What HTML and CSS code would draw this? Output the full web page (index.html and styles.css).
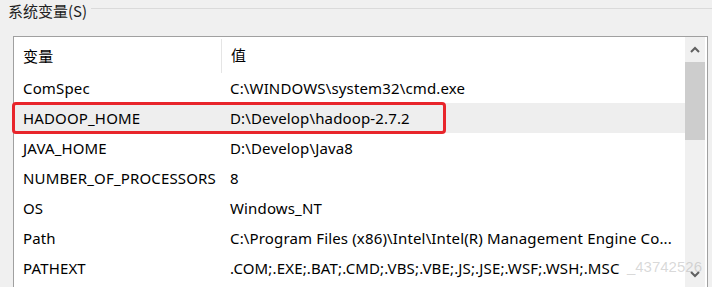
FILE: index.html
```html
<!DOCTYPE html>
<html lang="zh-CN">
<head>
  <meta charset="UTF-8">
  <title>系统变量</title>
  <link rel="stylesheet" href="styles.css">
</head>
<body>
  <div class="group">
    <div class="legend">
      <span class="legend-text">系统变量(S)</span>
      <span class="legend-line"></span>
    </div>
    <div class="list">
      <div class="table">
        <div class="row head">
          <div class="cell name">变量</div>
          <div class="cell value">值</div>
        </div>
        <div class="row">
          <div class="cell name">ComSpec</div>
          <div class="cell value">C:\WINDOWS\system32\cmd.exe</div>
        </div>
        <div class="row selected">
          <div class="cell name">HADOOP_HOME</div>
          <div class="cell value">D:\Develop\hadoop-2.7.2</div>
          <span class="mark"></span>
        </div>
        <div class="row">
          <div class="cell name">JAVA_HOME</div>
          <div class="cell value">D:\Develop\Java8</div>
        </div>
        <div class="row">
          <div class="cell name">NUMBER_OF_PROCESSORS</div>
          <div class="cell value">8</div>
        </div>
        <div class="row">
          <div class="cell name">OS</div>
          <div class="cell value">Windows_NT</div>
        </div>
        <div class="row">
          <div class="cell name">Path</div>
          <div class="cell value">C:\Program Files (x86)\Intel\Intel(R) Management Engine Co...</div>
        </div>
        <div class="row">
          <div class="cell name">PATHEXT</div>
          <div class="cell value">.COM;.EXE;.BAT;.CMD;.VBS;.VBE;.JS;.JSE;.WSF;.WSH;.MSC</div>
        </div>
      </div>
      <div class="scrollbar">
        <div class="arrow">
          <svg width="10" height="7" viewBox="0 0 10 7"><path d="M1 6 L5 2 L9 6" fill="none" stroke="#606060" stroke-width="2"/></svg>
        </div>
        <div class="thumb"></div>
        <div class="track"></div>
        <div class="arrow">
          <svg width="10" height="7" viewBox="0 0 10 7"><path d="M1 1 L5 5 L9 1" fill="none" stroke="#606060" stroke-width="2"/></svg>
        </div>
      </div>
    </div>
  </div>
  <div class="watermark">_43742526</div>
</body>
</html>
```

FILE: styles.css
```css
html, body {
  margin: 0;
  padding: 0;
}

body {
  width: 712px;
  height: 287px;
  overflow: hidden;
  background-color: #f0f0f0;
  font-family: "Noto Sans", "Noto Sans CJK SC", sans-serif;
  font-size: 15px;
  color: #000;
  position: relative;
}

.legend {
  display: flex;
  align-items: flex-start;
  height: 36px;
  padding-left: 8px;
}

.legend-text {
  font-family: "Noto Sans CJK SC", sans-serif;
  font-size: 15px;
  line-height: 22px;
  color: #222;
}

.legend-line {
  flex: 1;
  height: 1px;
  margin-top: 8px;
  margin-left: 4px;
  background-color: #dadada;
}

.list {
  display: flex;
  margin-left: 13px;
  margin-right: 4px;
  height: 250px;
  border: 1px solid #a0a0a0;
  background-color: #fff;
}

.table {
  flex: 1;
}

.row {
  display: flex;
  height: 30px;
  align-items: center;
  position: relative;
  letter-spacing: 0.15px;
}

.row.head {
  height: 36px;
}

.cell {
  white-space: nowrap;
  overflow: hidden;
}

.name {
  width: 198px;
  padding-left: 9px;
}

.value {
  flex: 1;
  padding-left: 9px;
}

.head .cell {
  font-family: "Noto Sans CJK SC", sans-serif;
  height: 36px;
  line-height: 36px;
}

.head .name {
  border-right: 1px solid #e5e5e5;
  height: 34px;
  margin-top: 1px;
  line-height: 34px;
}

.selected {
  background-color: #eeeeee;
}

.mark {
  position: absolute;
  left: -2px;
  top: -1px;
  width: 428px;
  height: 26px;
  border: 3px solid #e8252b;
  border-radius: 4px;
}

.scrollbar {
  width: 20px;
  display: flex;
  flex-direction: column;
  background-color: #f0f0f0;
  border-right: 2px solid #fff;
}

.arrow {
  height: 25px;
  display: flex;
  align-items: center;
  justify-content: center;
}

.thumb {
  height: 78px;
  background-color: #cdcdcd;
}

.track {
  flex: 1;
}

.watermark {
  position: absolute;
  right: 10px;
  top: 258px;
  font-family: "Liberation Sans", sans-serif;
  font-size: 15px;
  color: rgba(170, 170, 170, 0.45);
}
```
